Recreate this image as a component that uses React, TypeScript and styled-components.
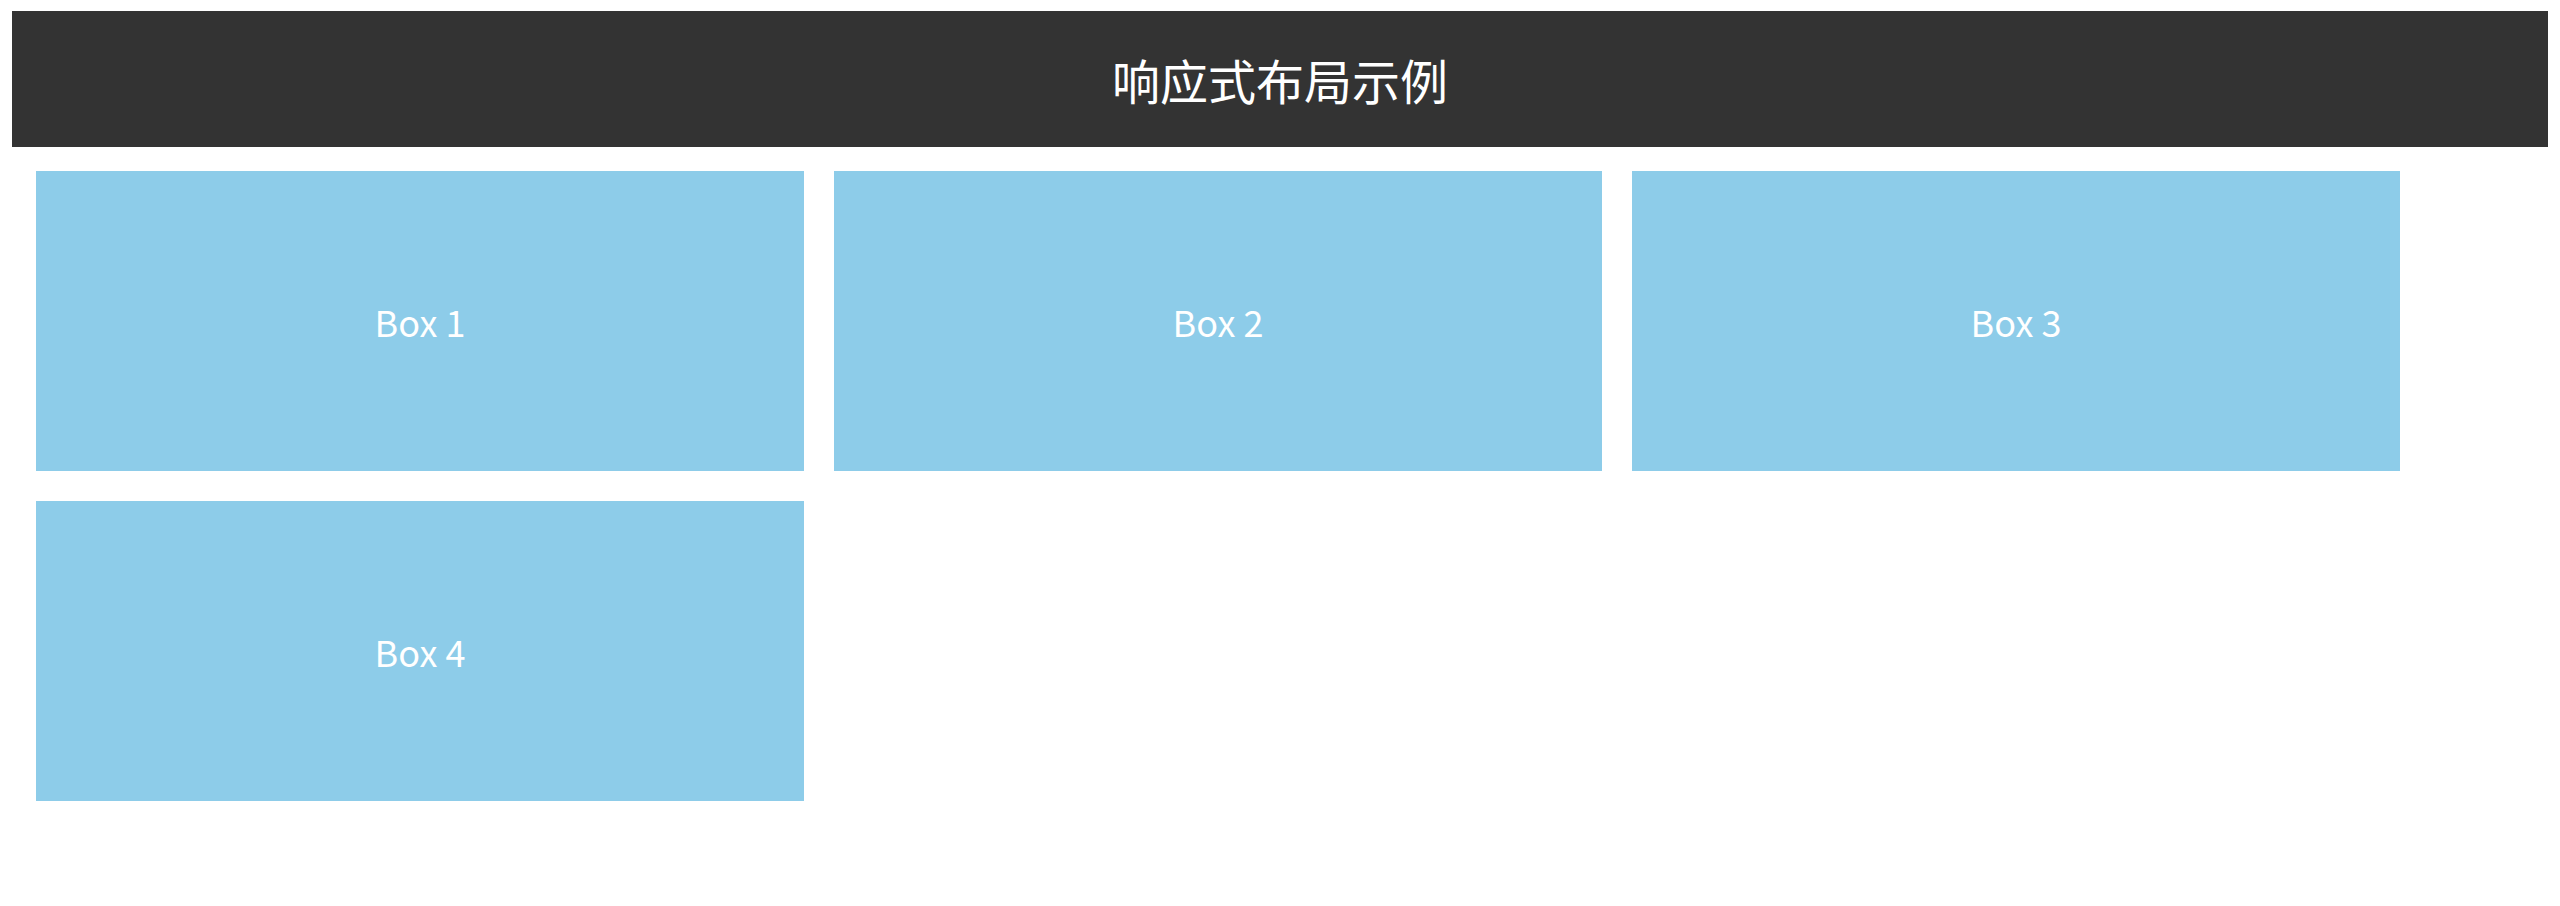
import * as React from 'react'
import styled, { createGlobalStyle } from 'styled-components'

const GlobalStyle = createGlobalStyle`
  html, body {
    margin: 0;
    padding: 0;
    background: #ffffff;
  }
  body {
    padding: 11px 12px 12px;
    font-family: "Noto Sans CJK SC", "Noto Sans", sans-serif;
  }
`

const Header = styled.header`
  background: #333333;
  color: #ffffff;
  height: 136px;
  display: flex;
  align-items: center;
  justify-content: center;
  font-size: 48px;
  font-weight: 400;
`

const Container = styled.div`
  display: flex;
  flex-wrap: wrap;
  gap: 30px;
  padding: 24px;
`

const Box = styled.div`
  width: 768px;
  height: 300px;
  background: #8dcce9;
  color: #ffffff;
  display: flex;
  align-items: center;
  justify-content: center;
  font-size: 36px;
`

const boxes = ['Box 1', 'Box 2', 'Box 3', 'Box 4']

const App = () => (
  <>
    <GlobalStyle />
    <Header>响应式布局示例</Header>
    <Container>
      {boxes.map(label => (
        <Box key={label}>{label}</Box>
      ))}
    </Container>
  </>
)

export default App
